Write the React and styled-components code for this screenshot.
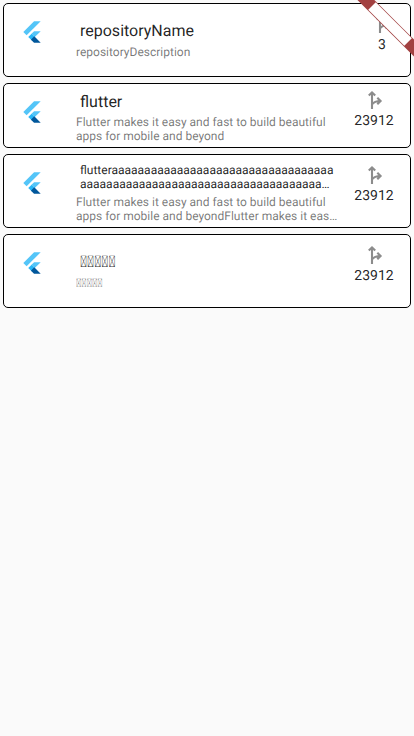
import React from 'react';
import styled, { createGlobalStyle } from 'styled-components';

const GlobalStyle = createGlobalStyle`
  * { box-sizing: border-box; }
  body {
    margin: 0;
    background: #fafafa;
    font-family: Roboto, sans-serif;
    text-rendering: geometricPrecision;
  }
`;

const Page = styled.main`
  position: relative;
  width: 414px;
  height: 736px;
  padding: 3px;
  overflow: hidden;
  display: flex;
  flex-direction: column;
  gap: 6px;
`;

const Card = styled.article`
  flex: none;
  display: grid;
  grid-template-columns: 72px 1fr 71px;
  height: ${(p) => p.$height}px;
  background: #fff;
  border: 1px solid #000;
  border-radius: 5px;
`;

const LogoCell = styled.div`
  padding: 16px 0 0 16px;
`;

const Texts = styled.div`
  padding-top: ${(p) => p.$top}px;
  min-width: 0;
`;

const Title = styled.div`
  margin-left: 4px;
  font-size: ${(p) => (p.$small ? 12 : 16)}px;
  line-height: ${(p) => (p.$small ? 14 : 19)}px;
  color: rgba(0, 0, 0, 0.87);
  white-space: pre;
`;

const Description = styled.div`
  margin-top: ${(p) => p.$gap}px;
  font-size: 12px;
  line-height: 14px;
  color: rgba(0, 0, 0, 0.54);
  white-space: pre;
`;

const Forks = styled.div`
  padding: ${(p) => p.$top}px ${(p) => (p.$narrow ? 0 : 1)}px 0 ${(p) => (p.$narrow ? 15 : 0)}px;
  display: flex;
  flex-direction: column;
  align-items: center;
`;

const Count = styled.span`
  margin-top: 1px;
  font-size: 14px;
  line-height: 16px;
  color: rgba(0, 0, 0, 0.87);
`;

const Ribbon = styled.svg`
  position: absolute;
  top: 0;
  right: 0;
`;

const FlutterLogo = () => (
  <svg width="24" height="24" viewBox="0 0 166 202">
    <path fill="#54c5f8" d="M37.7 128.9 9.8 101 100.4 10.4h55.8z" />
    <path fill="#54c5f8" d="M156.2 94h-55.8L78.5 115.9l27.9 27.9z" />
    <path fill="#29b6f6" d="m51.6 142.8 27.9-27.9 27.9 27.9-27.9 27.9z" />
    <path fill="#01579b" d="M74 165.200 100.4 191.6h55.8l-54.300-54.300z" />
  </svg>
);

const ForkIcon = () => (
  <svg width="24" height="24" viewBox="0 0 24 24" fill="none" stroke="#8c8c8c" strokeWidth="2.1">
    <path d="M10 21V4.400M6.800 7.600l3.200-3.200 3.200 3.200M10 16.500C12 13.500 14 13 18.500 13M15.300 9.700l3.300 3.300-3.300 3.300" />
  </svg>
);

const DebugRibbon = () => (
  <Ribbon width="60" height="60" viewBox="0 0 60 60">
    <g transform="translate(60 0) rotate(45)">
      <rect x="-40" y="28" width="80" height="12" fill="#a24141" />
      <rect x="-25.5" y="28.6" width="51" height="10.6" fill="#fff" />
    </g>
  </Ribbon>
);

const repositories = [
  { title: 'repositoryName', description: 'repositoryDescription', forks: 3, height: 74, top: 17, gap: 5, forkTop: 8, narrow: true },
  { title: 'flutter', description: 'Flutter makes it easy and fast to build beautiful\napps for mobile and beyond', forks: 23912, height: 65, top: 8, gap: 4, forkTop: 4 },
  {
    title: 'flutteraaaaaaaaaaaaaaaaaaaaaaaaaaaaaaaaaa\naaaaaaaaaaaaaaaaaaaaaaaaaaaaaaaaaaaaa…',
    description: 'Flutter makes it easy and fast to build beautiful\napps for mobile and beyondFlutter makes it eas…',
    forks: 23912, height: 74, top: 8, gap: 4, forkTop: 8, small: true,
  },
  { title: '\uE000\uE000\uE000\uE000\uE000', description: '\uE000\uE000\uE000\uE000\uE000', forks: 23912, height: 74, top: 17, gap: 5, forkTop: 8 },
];

export default function App() {
  return (
    <>
      <GlobalStyle />
      <Page>
        {repositories.map((repo, i) => (
          <Card key={i} $height={repo.height}>
            <LogoCell>
              <FlutterLogo />
            </LogoCell>
            <Texts $top={repo.top}>
              <Title $small={repo.small}>{repo.title}</Title>
              <Description $gap={repo.gap}>{repo.description}</Description>
            </Texts>
            <Forks $top={repo.forkTop} $narrow={repo.narrow}>
              <ForkIcon />
              <Count>{repo.forks}</Count>
            </Forks>
          </Card>
        ))}
        <DebugRibbon />
      </Page>
    </>
  );
}
